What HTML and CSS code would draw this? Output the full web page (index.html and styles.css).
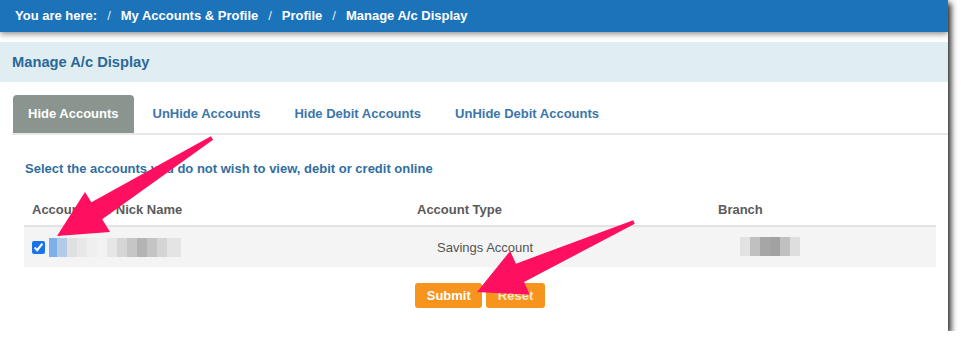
FILE: index.html
```html
<!DOCTYPE html>
<html>
<head>
<meta charset="utf-8">
<link rel="stylesheet" href="styles.css">
</head>
<body>
<div class="frame">
  <div class="crumbs">
    <span>You are here:</span><span class="sep">/</span>
    <span>My Accounts &amp; Profile</span><span class="sep">/</span>
    <span>Profile</span><span class="sep">/</span>
    <span>Manage A/c Display</span>
  </div>
  <div class="title">Manage A/c Display</div>
  <div class="tabs">
    <div class="tab active">Hide Accounts</div>
    <div class="tab">UnHide Accounts</div>
    <div class="tab">Hide Debit Accounts</div>
    <div class="tab">UnHide Debit Accounts</div>
  </div>
  <p class="hint">Select the accounts you do not wish to view, debit or credit online</p>
  <div class="table">
    <div class="th">Account No / Nick Name</div>
    <div class="th">Account Type</div>
    <div class="th">Branch</div>
    <div class="td first">
      <input type="checkbox" checked class="chk">
      <div class="blur name"><i></i><i></i><i></i><i></i><i></i><i></i><i></i><i></i><i></i><i></i><i></i><i></i><i></i></div>
    </div>
    <div class="td type">Savings Account</div>
    <div class="td branch">
      <div class="blur br"><i></i><i></i><i></i><i></i><i></i><i></i></div>
    </div>
  </div>
  <div class="actions">
    <button class="btn">Submit</button>
    <button class="btn reset">Reset</button>
  </div>
  <svg class="arrows" width="948" height="331" viewBox="0 0 948 331">
    <polygon points="210.9,136.3 91.4,202.3 85,192 57,236 110,232 102.2,219.3 213.1,139.7"/>
    <polygon points="633.2,220.2 515.9,263.7 510.2,250.9 477,292 529.8,294.7 524.1,281.9 634.8,223.8"/>
  </svg>
</div>
</body>
</html>
```

FILE: styles.css
```css
* { box-sizing: border-box; }
body {
  margin: 0;
  background: #fff;
  font-family: "Liberation Sans", Arial, sans-serif;
}
.frame {
  position: relative;
  width: 948px;
  height: 331px;
  background: #fff;
  box-shadow: 3px 3px 6px rgba(0, 0, 0, 0.85);
  overflow: hidden;
}
.crumbs {
  height: 32px;
  background: #1b73ba;
  color: #fff;
  font-weight: bold;
  font-size: 13px;
  display: flex;
  align-items: center;
  padding: 0 0 1px 15px;
  box-shadow: 0 2px 6px rgba(0, 0, 0, 0.45);
  position: relative;
}
.crumbs .sep {
  margin: 0 10px;
  font-weight: normal;
  opacity: 0.85;
}
.title {
  margin-top: 10px;
  height: 40px;
  background: #e0eef2;
  color: #2a6899;
  font-weight: bold;
  font-size: 14.7px;
  display: flex;
  align-items: center;
  padding-left: 12px;
}
.tabs {
  margin: 13px 0 0 12px;
  padding-left: 1px;
  display: flex;
  gap: 4px;
  border-bottom: 2px solid #e8e8e8;
}
.tab {
  height: 38px;
  padding: 0 15px 1px;
  display: flex;
  align-items: center;
  font-weight: bold;
  font-size: 13px;
  color: #3a76aa;
  border-radius: 4px 4px 0 0;
}
.tab.active {
  background: #8b9590;
  color: #fff;
}
.hint {
  margin: 26px 0 0 25px;
  line-height: 16px;
  font-weight: bold;
  font-size: 13px;
  color: #2f6ea3;
}
.table {
  margin: 16px 12px 0 24px;
  display: grid;
  grid-template-columns: 385px 301px 1fr;
}
.th {
  height: 34px;
  display: flex;
  align-items: center;
  padding-left: 8px;
  font-weight: bold;
  font-size: 13px;
  color: #5a5a5a;
  border-bottom: 2px solid #e2e2e2;
}
.td {
  height: 40px;
  background: #f4f4f4;
  display: flex;
  align-items: center;
  font-size: 13px;
  color: #555;
}
.td.first { padding-left: 8px; }
.td.type { padding-left: 28px; }
.td.branch { padding-left: 30px; }
.chk {
  margin: 0 4px 0 0;
  width: 13px;
  height: 13px;
  accent-color: #1a73e8;
}
.blur {
  display: flex;
  height: 19px;
}
.blur i { display: block; width: 10px; height: 100%; }
.name i:nth-child(1) { background: #7db0ea; width: 8px; }
.name i:nth-child(2) { background: #b4cbe8; }
.name i:nth-child(3) { background: #e0e0e0; }
.name i:nth-child(4) { background: #e8e8e8; }
.name i:nth-child(5) { background: #efefef; }
.name i:nth-child(6) { background: #f2f2f2; }
.name i:nth-child(7) { background: #e6e6e6; }
.name i:nth-child(8) { background: #d6d6d6; }
.name i:nth-child(9) { background: #c6c6c6; }
.name i:nth-child(10) { background: #b4b4b4; }
.name i:nth-child(11) { background: #c4c4c4; }
.name i:nth-child(12) { background: #d4d4d4; }
.name i:nth-child(13) { background: #e4e4e4; width: 14px; }
.br { margin-top: -2px; }
.br i:nth-child(1) { background: #e2e2e2; }
.br i:nth-child(2) { background: #c0c0c0; }
.br i:nth-child(3) { background: #a6a6a6; }
.br i:nth-child(4) { background: #a2a2a2; }
.br i:nth-child(5) { background: #c0c0c0; }
.br i:nth-child(6) { background: #dedede; }
.actions {
  margin: 16px 12px 0 24px;
  display: flex;
  justify-content: center;
  gap: 4px;
}
.btn {
  height: 25px;
  border: 0;
  border-radius: 3px;
  background: #f7941d;
  color: #fff;
  font-family: "Liberation Sans", Arial, sans-serif;
  font-weight: bold;
  font-size: 13px;
  padding: 0 11.5px;
}
.btn.reset { color: #fde9d0; }
.arrows {
  position: absolute;
  left: 0;
  top: 0;
  pointer-events: none;
}
.arrows polygon {
  fill: #ff0f5f;
}
```
